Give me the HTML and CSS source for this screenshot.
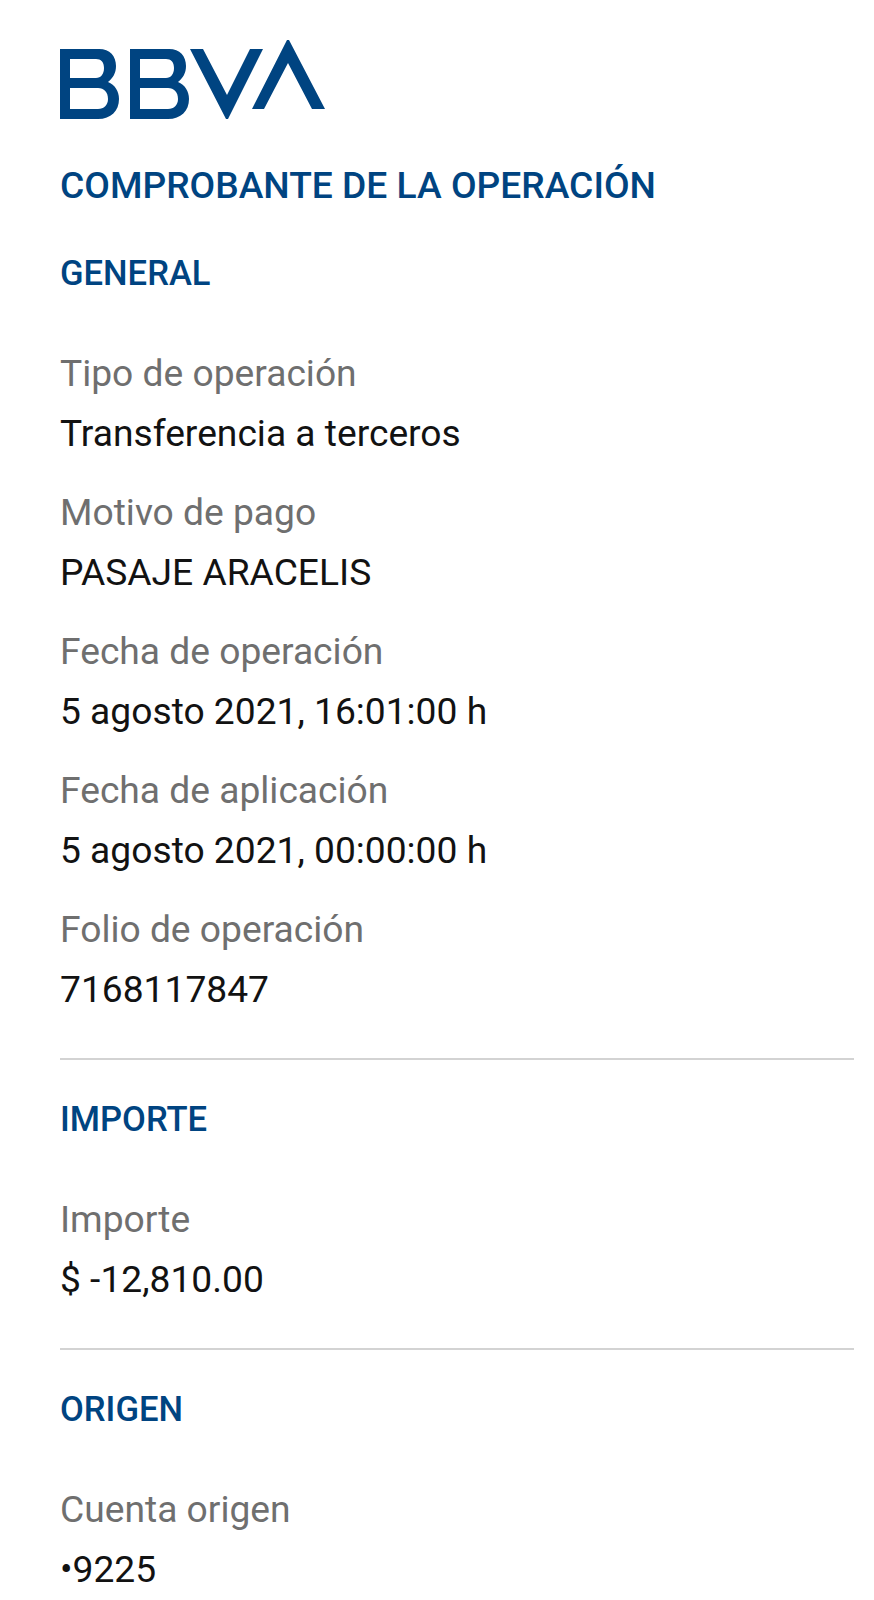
FILE: index.html
```html
<!DOCTYPE html>
<html lang="es">
<head>
<meta charset="utf-8">
<title>Comprobante</title>
<link rel="stylesheet" href="styles.css">
</head>
<body>
<main class="page">
  <svg class="logo" viewBox="0 0 267 82" width="267" height="82" aria-label="BBVA">
    <path fill-rule="evenodd" fill="#004481" d="M0 10H39C50 10 56 17 56 27C56 34 53 39 48 43C55 46 59 52 59 60C59 72 51 80 38 80H0ZM10 20V39H36C41 39 44 35 44 29C44 23 41 20 36 20ZM10 49V70H38C44 70 48 66 48 60C48 53 44 49 38 49Z"/>
    <path fill-rule="evenodd" fill="#004481" d="M70 10H109C120 10 126 17 126 27C126 34 123 39 118 43C125 46 129 52 129 60C129 72 121 80 108 80H70ZM80 20V39H106C111 39 114 35 114 29C114 23 111 20 106 20ZM80 49V70H108C114 70 118 66 118 60C118 53 114 49 108 49Z"/>
    <path fill="#004481" d="M130 10H143L167 56L190 10H203L168 80H166Z"/>
    <path fill="#004481" d="M227 1H229L265 70H252L228 24L204 70H192Z"/>
  </svg>
  <h1 class="title">COMPROBANTE DE LA OPERACIÓN</h1>

  <section class="section">
    <h2 class="heading">GENERAL</h2>
    <div class="field"><div class="label">Tipo de operación</div><div class="value">Transferencia a terceros</div></div>
    <div class="field"><div class="label">Motivo de pago</div><div class="value">PASAJE ARACELIS</div></div>
    <div class="field"><div class="label">Fecha de operación</div><div class="value">5 agosto 2021, 16:01:00 h</div></div>
    <div class="field"><div class="label">Fecha de aplicación</div><div class="value">5 agosto 2021, 00:00:00 h</div></div>
    <div class="field"><div class="label">Folio de operación</div><div class="value">7168117847</div></div>
  </section>

  <section class="section">
    <h2 class="heading">IMPORTE</h2>
    <div class="field"><div class="label">Importe</div><div class="value">$ -12,810.00</div></div>
  </section>

  <section class="section">
    <h2 class="heading">ORIGEN</h2>
    <div class="field"><div class="label">Cuenta origen</div><div class="value">•9225</div></div>
  </section>
</main>
</body>
</html>
```
FILE: styles.css
```css
html, body {
  margin: 0;
  padding: 0;
  background: #fff;
}
body {
  font-family: Roboto, "Liberation Sans", sans-serif;
}
.page {
  padding: 39px 20px 0 60px;
}
.logo {
  display: block;
}
.title {
  margin: 43px 0 0;
  font-size: 37.2px;
  line-height: 42px;
  font-weight: 500;
  color: #004481;
}
.section {
  padding-bottom: 49px;
  border-bottom: 2px solid #d3d3d3;
  margin-bottom: 39px;
}
.title + .section {
  margin-top: 47px;
}
.section:last-child {
  padding-bottom: 0;
  margin-bottom: 0;
  border-bottom: 0;
}
.heading {
  margin: 0 0 60px;
  font-size: 34.6px;
  line-height: 40px;
  font-weight: 500;
  color: #004481;
}
.field {
  margin-top: 39px;
}
.label {
  font-size: 37.2px;
  line-height: 40px;
  color: #6f6f6f;
}
.value {
  margin-top: 20px;
  font-size: 37.2px;
  line-height: 40px;
  color: #121212;
}
```
